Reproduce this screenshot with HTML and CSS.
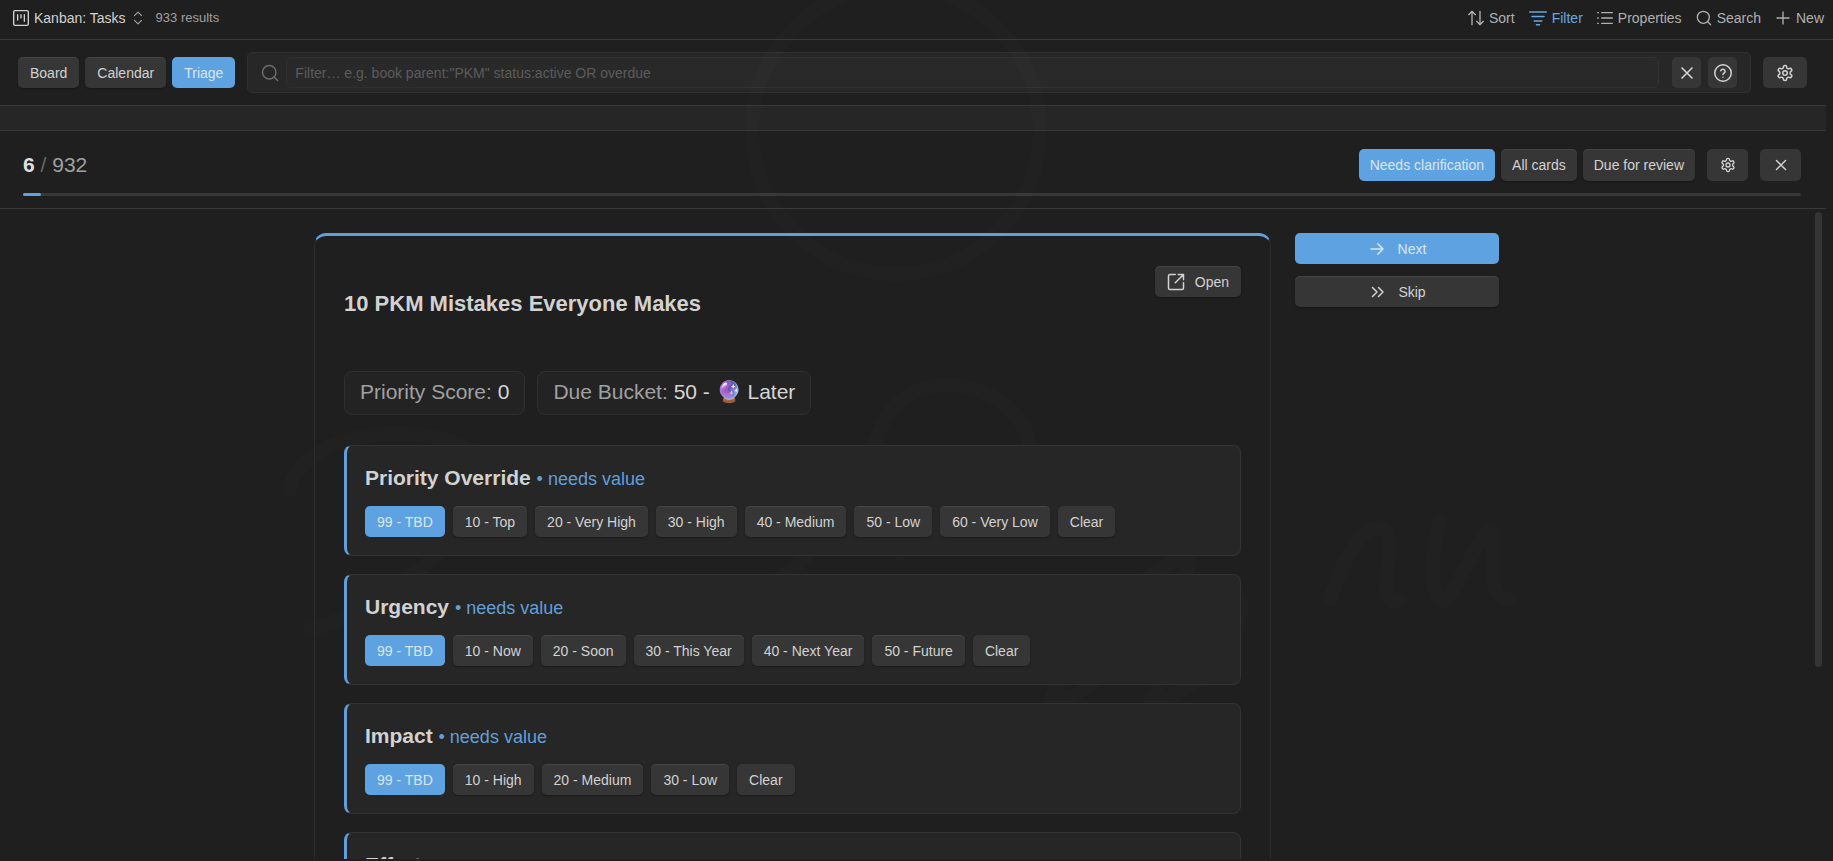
FILE: index.html
```html
<!DOCTYPE html>
<html lang="en">
<head>
<meta charset="utf-8">
<title>Kanban: Tasks</title>
<link rel="stylesheet" href="styles.css">
</head>
<body>
<svg class="sprite" aria-hidden="true">
  <symbol id="gear" viewBox="0 0 24 24"><path d="M12.22 2h-.44a2 2 0 0 0-2 2v.18a2 2 0 0 1-1 1.73l-.43.25a2 2 0 0 1-2 0l-.15-.08a2 2 0 0 0-2.73.73l-.22.38a2 2 0 0 0 .73 2.73l.15.1a2 2 0 0 1 1 1.72v.51a2 2 0 0 1-1 1.74l-.15.09a2 2 0 0 0-.73 2.73l.22.38a2 2 0 0 0 2.73.73l.15-.08a2 2 0 0 1 2 0l.43.25a2 2 0 0 1 1 1.73V20a2 2 0 0 0 2 2h.44a2 2 0 0 0 2-2v-.18a2 2 0 0 1 1-1.73l.43-.25a2 2 0 0 1 2 0l.15.08a2 2 0 0 0 2.73-.73l.22-.39a2 2 0 0 0-.73-2.73l-.15-.08a2 2 0 0 1-1-1.74v-.5a2 2 0 0 1 1-1.74l.15-.09a2 2 0 0 0 .73-2.73l-.22-.38a2 2 0 0 0-2.73-.73l-.15.08a2 2 0 0 1-2 0l-.43-.25a2 2 0 0 1-1-1.73V4a2 2 0 0 0-2-2z"/><circle cx="12" cy="12" r="3"/></symbol>
  <symbol id="x" viewBox="0 0 24 24"><path d="M18 6 6 18M6 6l12 12"/></symbol>
  <symbol id="search" viewBox="0 0 24 24"><circle cx="11" cy="11" r="9"/><path d="m22 22-4.300-4.300"/></symbol>
</svg>

<svg class="watermark" viewBox="0 0 1833 861" preserveAspectRatio="none" aria-hidden="true">
  <circle cx="896" cy="130" r="144"/>
  <path d="M290 490C300 430 420 420 470 450S420 600 310 630"/>
  <path d="M760 590C820 560 850 500 880 430S1000 380 1025 430S960 540 900 550"/>
  <path d="M1050 700C1080 640 1140 570 1180 560S1110 690 1060 700M1150 700C1180 650 1230 590 1240 600S1210 690 1160 700"/>
  <path d="M1330 600C1350 540 1370 520 1385 530S1370 610 1400 600M1440 520C1430 560 1430 590 1440 600S1480 530 1490 530S1480 600 1510 600"/>
</svg>

<header class="topbar">
  <button class="view" type="button">
    <svg class="icon i16" viewBox="0 0 24 24"><rect x="1" y="1" width="22" height="22" rx="2"/><path d="M7 7v8M12 7v5M17 7v10"/></svg>
    <span>Kanban: Tasks</span>
    <svg class="icon i14 dim" viewBox="0 0 24 24"><path d="m6 16 6 6 6-6M6 8l6-6 6 6"/></svg>
  </button>
  <span class="results">933 results</span>
  <nav class="actions">
    <button type="button"><svg class="icon i16" viewBox="0 0 24 24"><path d="M1 7l5-5 5 5M6 2v20M23 17l-5 5-5-5M18 22V2"/></svg>Sort</button>
    <button type="button" class="on"><svg class="icon i18" viewBox="0 0 24 24"><path d="M1 4h22M4 10h16M7 16h10M10 21h4"/></svg>Filter</button>
    <button type="button"><svg class="icon i16" viewBox="0 0 24 24"><path d="M7 4h16M7 12h16M7 20h16M1 4h1M1 12h1M1 20h1"/></svg>Properties</button>
    <button type="button"><svg class="icon i16"><use href="#search"/></svg>Search</button>
    <button type="button"><svg class="icon i16" viewBox="0 0 24 24"><path d="M3 12h18M12 3v18"/></svg>New</button>
  </nav>
</header>

<div class="toolbar">
  <div class="tabs">
    <button class="btn" type="button">Board</button>
    <button class="btn" type="button">Calendar</button>
    <button class="btn primary" type="button">Triage</button>
  </div>
  <div class="filter">
    <svg class="icon i18 search"><use href="#search"/></svg>
    <input type="text" aria-label="Filter" placeholder='Filter… e.g. book parent:"PKM" status:active OR overdue'>
    <button class="btn square" type="button" aria-label="Clear filter"><svg class="icon i20"><use href="#x"/></svg></button>
    <button class="btn square" type="button" aria-label="Help"><svg class="icon i18" viewBox="0 0 24 24"><circle cx="12" cy="12" r="11"/><path d="M9 9a3 3 0 0 1 5.800 1c0 2-2.800 2.400-2.800 4M12 17.500h.01"/></svg></button>
  </div>
  <button class="btn wide" type="button" aria-label="Settings"><svg class="icon i18"><use href="#gear"/></svg></button>
</div>

<div class="band"></div>

<section class="progress">
  <div class="row">
    <p class="count"><b>6</b> <i>/</i> 932</p>
    <div class="modes">
      <button class="btn primary" type="button">Needs clarification</button>
      <button class="btn" type="button">All cards</button>
      <button class="btn" type="button">Due for review</button>
    </div>
    <button class="btn mid" type="button" aria-label="Triage settings"><svg class="icon i16"><use href="#gear"/></svg></button>
    <button class="btn mid" type="button" aria-label="Close triage"><svg class="icon i18"><use href="#x"/></svg></button>
  </div>
  <div class="track"><div class="fill"></div></div>
</section>

<main class="stage">
  <article class="card">
    <div class="head">
      <h1>10 PKM Mistakes Everyone Makes</h1>
      <button class="btn open" type="button"><svg class="icon i18" viewBox="0 0 24 24"><path d="M15 2h7v7M11 13 22 2M22 13v7a2 2 0 0 1-2 2H4a2 2 0 0 1-2-2V4a2 2 0 0 1 2-2h7"/></svg>Open</button>
    </div>
    <div class="chips">
      <span class="chip">Priority Score: <em>0</em></span>
      <span class="chip">Due Bucket: <em>50 - 🔮 Later</em></span>
    </div>
    <section class="field">
      <h2>Priority Override <span>• needs value</span></h2>
      <div class="options">
        <button class="btn primary" type="button">99 - TBD</button>
        <button class="btn" type="button">10 - Top</button>
        <button class="btn" type="button">20 - Very High</button>
        <button class="btn" type="button">30 - High</button>
        <button class="btn" type="button">40 - Medium</button>
        <button class="btn" type="button">50 - Low</button>
        <button class="btn" type="button">60 - Very Low</button>
        <button class="btn flat" type="button">Clear</button>
      </div>
    </section>
    <section class="field">
      <h2>Urgency <span>• needs value</span></h2>
      <div class="options">
        <button class="btn primary" type="button">99 - TBD</button>
        <button class="btn" type="button">10 - Now</button>
        <button class="btn" type="button">20 - Soon</button>
        <button class="btn" type="button">30 - This Year</button>
        <button class="btn" type="button">40 - Next Year</button>
        <button class="btn" type="button">50 - Future</button>
        <button class="btn flat" type="button">Clear</button>
      </div>
    </section>
    <section class="field">
      <h2>Impact <span>• needs value</span></h2>
      <div class="options">
        <button class="btn primary" type="button">99 - TBD</button>
        <button class="btn" type="button">10 - High</button>
        <button class="btn" type="button">20 - Medium</button>
        <button class="btn" type="button">30 - Low</button>
        <button class="btn flat" type="button">Clear</button>
      </div>
    </section>
    <section class="field">
      <h2>Effort <span>• needs value</span></h2>
    </section>
  </article>
  <aside class="side">
    <button class="btn primary" type="button"><svg class="icon i18" viewBox="0 0 24 24"><path d="M4 12h16M13 5l7 7-7 7"/></svg>Next</button>
    <button class="btn" type="button"><svg class="icon i18" viewBox="0 0 24 24"><path d="m6 18 6-6-6-6M14 18l6-6-6-6"/></svg>Skip</button>
  </aside>
  <div class="thumb"></div>
</main>
</body>
</html>
```
FILE: styles.css
```css
:root {
  --bg: #1f1f1f;
  --raised: #262626;
  --line: #383838;
  --button: #363636;
  --accent: #5fa2e2;
  --text: #d2d2d2;
  --muted: #a0a0a0;
}

* { box-sizing: border-box; }

body {
  margin: 0;
  height: 100vh;
  padding-bottom: 2px;
  display: flex;
  flex-direction: column;
  overflow: hidden;
  background: var(--bg);
  color: var(--text);
  font: 14px/18px "Liberation Sans", Arial, sans-serif;
}

button, input { font: inherit; color: inherit; }
h1, h2, p { margin: 0; }
.sprite { display: none; }

.watermark {
  position: absolute;
  inset: 0;
  width: 100%;
  height: 100%;
  fill: none;
  stroke: #ffffff;
  stroke-width: 14;
  stroke-linecap: round;
  opacity: 0.009;
  pointer-events: none;
}

.icon {
  flex: none;
  fill: none;
  stroke: currentColor;
  stroke-width: 2;
  stroke-linecap: round;
  stroke-linejoin: round;
}
.i14 { width: 14px; height: 14px; }
.i16 { width: 16px; height: 16px; }
.i18 { width: 18px; height: 18px; }
.i20 { width: 20px; height: 20px; }
.dim { color: var(--muted); }

/* Top bar */
.topbar {
  flex: none;
  display: flex;
  align-items: center;
  height: 40px;
  padding: 0 9px 4px 13px;
  border-bottom: 1px solid var(--line);
}
.topbar button {
  display: flex;
  align-items: center;
  gap: 5px;
  padding: 0;
  border: 0;
  background: none;
}
.results { margin-left: 11px; font-size: 13px; color: var(--muted); }
.actions {
  display: flex;
  gap: 14px;
  margin-left: auto;
  color: #b0b0b0;
}
.actions .on { color: #68a8e0; }

/* Buttons */
.btn {
  display: flex;
  align-items: center;
  justify-content: center;
  height: 31px;
  padding: 0 12px;
  border: 0;
  border-radius: 5px;
  background: var(--button);
  box-shadow: inset 0 1px 0 #454545, 0 1px 2px rgba(0, 0, 0, 0.3);
  white-space: nowrap;
}
.btn.flat { box-shadow: 0 1px 2px rgba(0, 0, 0, 0.3); }
.btn.primary {
  background: var(--accent);
  color: #d8e6f4;
  box-shadow: none;
}
.btn.square { width: 29px; padding: 0; box-shadow: none; }
.btn.wide { width: 44px; padding: 0; box-shadow: none; }
.btn.mid { width: 41px; padding: 0; box-shadow: none; }

/* View tabs and filter */
.toolbar {
  flex: none;
  display: flex;
  align-items: center;
  gap: 12px;
  padding: 12px 26px 12px 18px;
}
.tabs { display: flex; gap: 6px; }
.filter {
  flex: 1;
  display: flex;
  align-items: center;
  gap: 7px;
  height: 41px;
  padding: 0 13px;
  border: 1px solid #303030;
  border-radius: 5px;
  background: #272727;
}
.filter .search { color: #6c6c6c; }
.filter input {
  flex: 1;
  min-width: 0;
  height: 31px;
  margin-right: 6px;
  padding: 0 8px;
  border: 1px solid #303030;
  border-radius: 5px;
  background: #292929;
  outline: 0;
}
.filter input::placeholder { color: #5c5c5c; opacity: 1; }

.band {
  flex: none;
  height: 26px;
  margin-right: 7px;
  border: solid var(--line);
  border-width: 1px 0;
  background: var(--raised);
}

/* Triage progress */
.progress {
  flex: none;
  margin-right: 7px;
  padding: 18px 25px 12px 23px;
  border-bottom: 1px solid var(--line);
}
.row { display: flex; align-items: center; gap: 12px; }
.row .btn { height: 32px; }
.count {
  margin-right: auto;
  font-size: 21px;
  line-height: 30px;
  color: #a0a0a0;
}
.count b { color: #dedede; }
.count i { font-style: normal; color: #666666; }
.modes { display: flex; gap: 6px; }
.modes .btn { padding: 0 11px; }
.track {
  height: 3px;
  margin-top: 12px;
  border-radius: 2px;
  background: var(--line);
}
.fill { width: 1%; height: 100%; border-radius: 2px; background: var(--accent); }

/* Triage card */
.stage {
  position: relative;
  flex: 1;
  min-height: 0;
  display: flex;
  justify-content: center;
  align-items: flex-start;
  gap: 24px;
  padding: 24px 20px 0 0;
  overflow: hidden;
}
.card {
  flex: 0 1 957px;
  display: flex;
  flex-direction: column;
  gap: 18px;
  padding: 30px 29px;
  border: 1px solid #2c2c2c;
  border-top: 3px solid #619fdb;
  border-radius: 12px;
}
.head { display: flex; justify-content: space-between; align-items: flex-start; }
.head h1 { padding: 24px 0; font-size: 22px; line-height: 28px; }
.open { gap: 10px; }
.chips { display: flex; flex-wrap: wrap; gap: 12px; padding: 11px 0 12px; }
.chip {
  padding: 7px 15px 9px;
  border: 1px solid #303030;
  border-radius: 8px;
  background: #232323;
  font-size: 21px;
  line-height: 26px;
  color: var(--muted);
}
.chip em { font-style: normal; color: #d6d6d6; }

.field {
  padding: 17px 18px;
  border: 1px solid #343434;
  border-left: 3px solid #619fdb;
  border-radius: 8px;
  background: var(--raised);
}
.field h2 { font-size: 21px; line-height: 30px; }
.field h2 span { font-size: 18px; line-height: 18px; font-weight: 400; color: #629fd8; }
.options { display: flex; flex-wrap: wrap; gap: 8px; margin: 13px 0 1px; }

.side {
  flex: 0 0 204px;
  display: flex;
  flex-direction: column;
  gap: 12px;
}
.side .btn { gap: 12px; }

.thumb {
  position: absolute;
  top: 3px;
  right: 11px;
  width: 7px;
  height: 70%;
  border-radius: 4px;
  background: #353535;
}
```
